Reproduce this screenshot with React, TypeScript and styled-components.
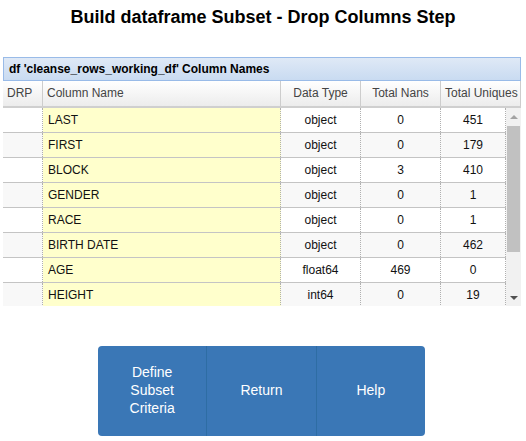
import React from "react";
import styled, { createGlobalStyle } from "styled-components";

const Global = createGlobalStyle`
  html, body { margin: 0; padding: 0; background: #fff; }
  body { font-family: "Liberation Sans", Arial, sans-serif; color: #000; }
  * { box-sizing: border-box; }
`;

const Page = styled.div`
  width: 526px;
  display: flex;
  flex-direction: column;
`;

const Title = styled.h1`
  margin: 7px 0 30px;
  font-size: 18px;
  line-height: 20px;
  font-weight: bold;
  text-align: center;
`;

const Grid = styled.div`
  margin-left: 3px;
  width: 518px;
  display: flex;
  flex-direction: column;
`;

const Caption = styled.div`
  height: 24px;
  border: 1px solid #99bbe8;
  background: linear-gradient(#dfe9f6, #c9dbf1);
  font-size: 12px;
  font-weight: bold;
  line-height: 22px;
  padding-left: 5px;
`;

const COLS = "40px 238px 80px 80px 80px";

const HeaderRow = styled.div`
  display: grid;
  grid-template-columns: ${COLS};
  height: 27px;
  background: linear-gradient(#ffffff, #ececec);
  border-bottom: 2px solid #cfcfcf;
`;

const HeaderCell = styled.div<{ $align?: string }>`
  font-size: 12px;
  color: #444;
  line-height: 25px;
  padding: 0 4px;
  text-align: ${(p) => p.$align || "center"};
  border-right: 1px solid #cdcdcd;
  white-space: nowrap;
  overflow: hidden;
`;

const Body = styled.div`
  display: flex;
  height: 198px;
  overflow: hidden;
`;

const Rows = styled.div`
  width: 503px;
  display: flex;
  flex-direction: column;
`;

const BODY_COLS = "40px 238px 80px 80px 65px";

const Row = styled.div<{ $odd: boolean }>`
  display: grid;
  grid-template-columns: ${BODY_COLS};
  flex: none;
  height: 25px;
  border-bottom: 1px solid #c4c4c4;
  background: ${(p) => (p.$odd ? "#f8f8f8" : "#ffffff")};
`;

const Cell = styled.div<{ $name?: boolean }>`
  font-size: 12px;
  line-height: 24px;
  color: #111;
  padding: 0 5px;
  text-align: ${(p) => (p.$name ? "left" : "center")};
  background: ${(p) => (p.$name ? "#ffffcc" : "transparent")};
  border-right: 1px dotted #b0b0b0;
  white-space: nowrap;
  overflow: hidden;
`;

const Scrollbar = styled.div`
  width: 15px;
  background: #f1f1f1;
  display: flex;
  flex-direction: column;
  align-items: center;
`;

const Arrow = styled.div<{ $down?: boolean }>`
  height: 17px;
  width: 15px;
  flex: none;
  display: flex;
  align-items: center;
  justify-content: center;
  &::after {
    content: "";
    border-left: 4px solid transparent;
    border-right: 4px solid transparent;
    ${(p) =>
      p.$down
        ? "border-top: 4px solid #505050;"
        : "border-bottom: 4px solid #a3a3a3;"}
  }
`;

const Track = styled.div`
  flex: 1;
  width: 15px;
  display: flex;
  flex-direction: column;
  align-items: center;
  padding-top: 1px;
`;

const Thumb = styled.div`
  width: 13px;
  height: 126px;
  background: #c1c1c1;
`;

const ButtonGroup = styled.div`
  margin: 40px 0 0 98px;
  width: 327px;
  height: 90px;
  display: flex;
  border-radius: 4px;
  overflow: hidden;
`;

const Button = styled.button`
  flex: 1;
  border: none;
  border-right: 1px solid #2e6da4;
  background: #3a77b6;
  color: #fff;
  font-family: "Liberation Sans", Arial, sans-serif;
  font-size: 14px;
  line-height: 18px;
  padding: 0 20px 2px;
  cursor: pointer;
  &:last-child { border-right: none; }
`;

type Col = { name: string; type: string; nans: number; uniq: number };

const rows: Col[] = [
  { name: "LAST", type: "object", nans: 0, uniq: 451 },
  { name: "FIRST", type: "object", nans: 0, uniq: 179 },
  { name: "BLOCK", type: "object", nans: 3, uniq: 410 },
  { name: "GENDER", type: "object", nans: 0, uniq: 1 },
  { name: "RACE", type: "object", nans: 0, uniq: 1 },
  { name: "BIRTH DATE", type: "object", nans: 0, uniq: 462 },
  { name: "AGE", type: "float64", nans: 469, uniq: 0 },
  { name: "HEIGHT", type: "int64", nans: 0, uniq: 19 },
];

export default function App() {
  return (
    <Page>
      <Global />
      <Title>Build dataframe Subset - Drop Columns Step</Title>
      <Grid>
        <Caption>df 'cleanse_rows_working_df' Column Names</Caption>
        <HeaderRow>
          <HeaderCell $align="left">DRP</HeaderCell>
          <HeaderCell $align="left">Column Name</HeaderCell>
          <HeaderCell>Data Type</HeaderCell>
          <HeaderCell>Total Nans</HeaderCell>
          <HeaderCell>Total Uniques</HeaderCell>
        </HeaderRow>
        <Body>
          <Rows>
            {rows.map((r, i) => (
              <Row key={r.name} $odd={i % 2 === 1}>
                <Cell />
                <Cell $name>{r.name}</Cell>
                <Cell>{r.type}</Cell>
                <Cell>{r.nans}</Cell>
                <Cell>{r.uniq}</Cell>
              </Row>
            ))}
          </Rows>
          <Scrollbar>
            <Arrow />
            <Track>
              <Thumb />
            </Track>
            <Arrow $down />
          </Scrollbar>
        </Body>
      </Grid>
      <ButtonGroup>
        <Button>Define Subset Criteria</Button>
        <Button>Return</Button>
        <Button>Help</Button>
      </ButtonGroup>
    </Page>
  );
}
